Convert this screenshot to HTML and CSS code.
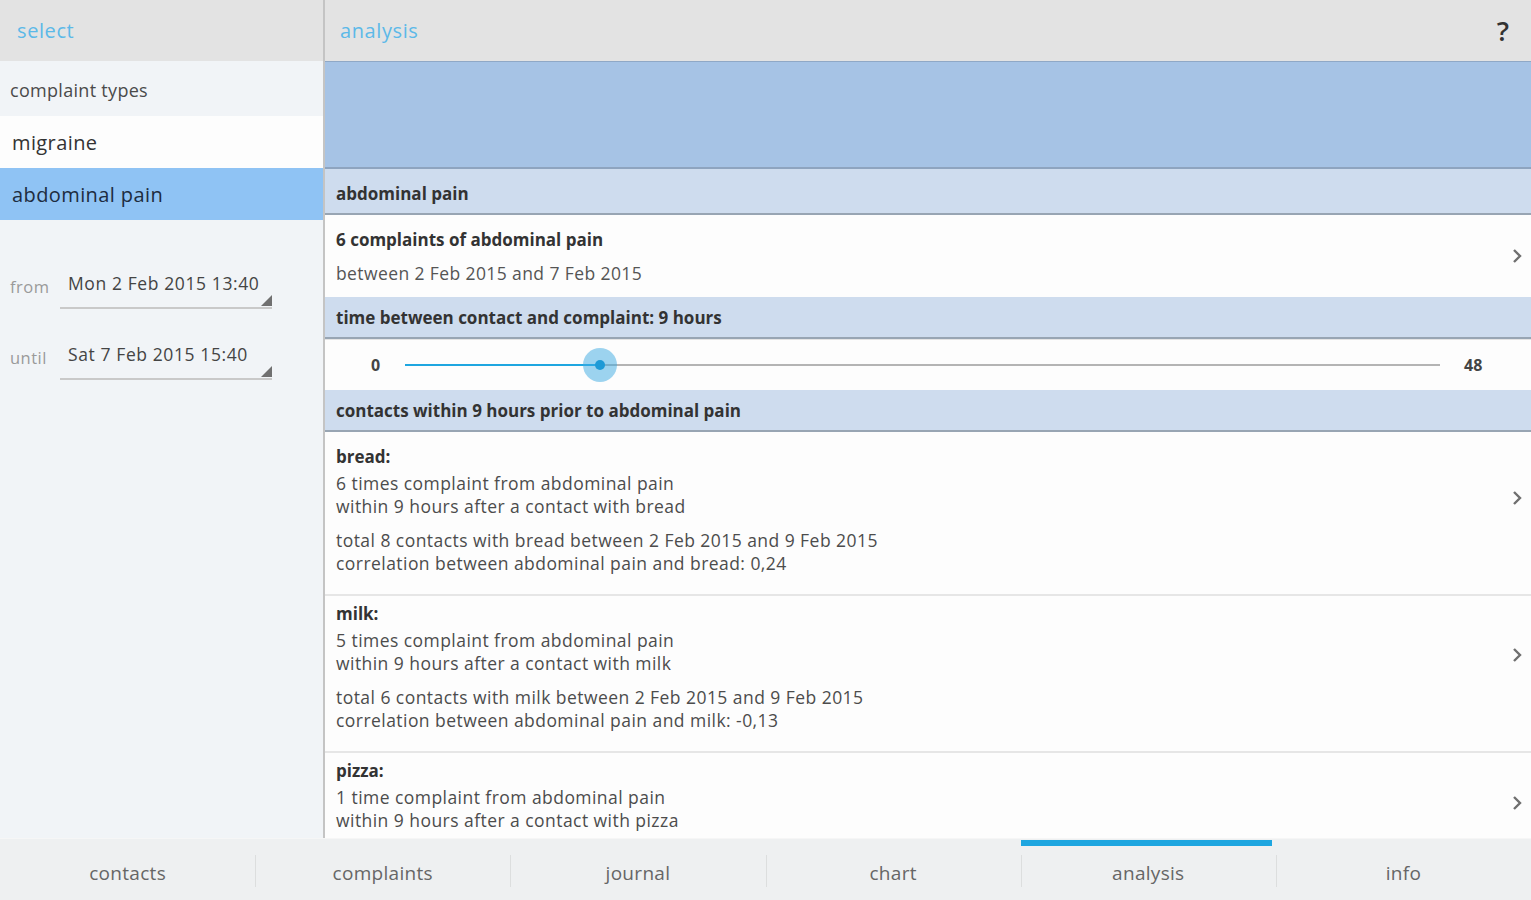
FILE: index.html
```html
<!DOCTYPE html>
<html lang="en">

<head>
    <meta charset="UTF-8">
    <meta name="viewport" content="width=device-width, initial-scale=1.0">
    <title>Analysis</title>
    <link rel="stylesheet" href="styles.css">
</head>

<body>
    <div class="app">
        <div class="panes">
            <!-- left: selection -->
            <aside class="select-pane">
                <div class="bar">
                    <span class="bar-title">select</span>
                </div>
                <div class="list-label">complaint types</div>
                <div class="type-item">migraine</div>
                <div class="type-item selected">abdominal pain</div>

                <div class="dates">
                    <div class="date-row">
                        <span class="date-label">from</span>
                        <div class="date-field">Mon 2 Feb 2015 13:40</div>
                    </div>
                    <div class="date-row">
                        <span class="date-label">until</span>
                        <div class="date-field">Sat 7 Feb 2015 15:40</div>
                    </div>
                </div>
            </aside>

            <!-- right: analysis -->
            <main class="analysis-pane">
                <div class="bar">
                    <span class="bar-title">analysis</span>
                    <span class="help">?</span>
                </div>
                <div class="scroll">
                    <div class="band"></div>

                    <div class="section-head first">abdominal pain</div>
                    <div class="row summary">
                        <div class="row-body">
                            <div class="row-title">6 complaints of abdominal pain</div>
                            <div class="row-sub">between 2 Feb 2015 and 7 Feb 2015</div>
                        </div>
                        <svg class="chevron" width="10" height="16" viewBox="0 0 10 16">
                            <polyline points="2,2 8,8 2,14" fill="none" stroke="#6f6f6f" stroke-width="2.4" />
                        </svg>
                    </div>

                    <div class="section-head">time between contact and complaint: 9 hours</div>
                    <div class="slider-row">
                        <span class="slider-min">0</span>
                        <div class="slider">
                            <div class="slider-fill" style="width: 18.8%"></div>
                            <div class="slider-thumb" style="left: 18.8%"></div>
                        </div>
                        <span class="slider-max">48</span>
                    </div>

                    <div class="section-head">contacts within 9 hours prior to abdominal pain</div>
                    <div class="contacts">
                        <div class="row contact">
                            <div class="row-body">
                                <div class="contact-name">bread:</div>
                                <p>6 times complaint from abdominal pain<br>within 9 hours after a contact with bread</p>
                                <p class="totals">total 8 contacts with bread between 2 Feb 2015 and 9 Feb 2015<br>correlation between abdominal pain and bread: 0,24</p>
                            </div>
                            <svg class="chevron" width="10" height="16" viewBox="0 0 10 16">
                                <polyline points="2,2 8,8 2,14" fill="none" stroke="#6f6f6f" stroke-width="2.4" />
                            </svg>
                        </div>
                        <div class="row contact">
                            <div class="row-body">
                                <div class="contact-name">milk:</div>
                                <p>5 times complaint from abdominal pain<br>within 9 hours after a contact with milk</p>
                                <p class="totals">total 6 contacts with milk between 2 Feb 2015 and 9 Feb 2015<br>correlation between abdominal pain and milk: -0,13</p>
                            </div>
                            <svg class="chevron" width="10" height="16" viewBox="0 0 10 16">
                                <polyline points="2,2 8,8 2,14" fill="none" stroke="#6f6f6f" stroke-width="2.4" />
                            </svg>
                        </div>
                        <div class="row contact last">
                            <div class="row-body">
                                <div class="contact-name">pizza:</div>
                                <p>1 time complaint from abdominal pain<br>within 9 hours after a contact with pizza</p>
                            </div>
                            <svg class="chevron" width="10" height="16" viewBox="0 0 10 16">
                                <polyline points="2,2 8,8 2,14" fill="none" stroke="#6f6f6f" stroke-width="2.4" />
                            </svg>
                        </div>
                    </div>
                </div>
            </main>
        </div>

        <nav class="tabs">
            <div class="tab">contacts</div>
            <div class="tab">complaints</div>
            <div class="tab">journal</div>
            <div class="tab">chart</div>
            <div class="tab active">analysis</div>
            <div class="tab">info</div>
        </nav>
    </div>
</body>

</html>
```

FILE: styles.css
```css
:root {
    --bar-bg: #e3e3e3;
    --accent: #5cb9e8;
    --pane-bg: #f1f4f7;
    --selected: #8fc3f4;
    --band: #a6c3e5;
    --section: #cedcee;
    --section-line: #98a5b3;
    --text: #3a3a3a;
    --muted: #9a9a9a;
    --tab-bg: #eef0f1;
    --tab-active: #1ea6e0;
}

* {
    box-sizing: border-box;
}

body {
    margin: 0;
    font-family: "Open Sans", "Noto Sans", sans-serif;
    color: var(--text);
    background: #ffffff;
}

.app {
    width: 1531px;
    height: 900px;
    display: flex;
    flex-direction: column;
    overflow: hidden;
}

.panes {
    flex: 1;
    display: flex;
    min-height: 0;
}

/* top bars */
.bar {
    height: 61px;
    flex: none;
    display: flex;
    align-items: center;
    background: var(--bar-bg);
    padding-left: 17px;
    padding-right: 22px;
}

.bar-title {
    color: var(--accent);
    font-size: 20px;
    letter-spacing: 0.6px;
}

.help {
    margin-left: auto;
    font-size: 27px;
    font-weight: 600;
    color: #333;
}

/* left pane */
.select-pane {
    width: 325px;
    flex: none;
    display: flex;
    flex-direction: column;
    background: var(--pane-bg);
    border-right: 2px solid #c4c4c4;
}

.list-label {
    height: 55px;
    display: flex;
    align-items: center;
    padding-left: 10px;
    padding-top: 2px;
    font-size: 18px;
    letter-spacing: 0.3px;
    color: #4a4a4a;
}

.type-item {
    height: 52px;
    display: flex;
    align-items: center;
    padding-left: 12px;
    font-size: 20px;
    letter-spacing: 0.4px;
    color: #333;
    background: #fdfdfd;
}

.type-item.selected {
    background: var(--selected);
    color: #1d2c40;
}

.dates {
    padding-top: 45px;
}

.date-row {
    display: flex;
    align-items: flex-start;
    height: 71px;
}

.date-label {
    width: 60px;
    padding-left: 10px;
    padding-top: 10px;
    font-size: 16.5px;
    letter-spacing: 0.5px;
    color: var(--muted);
}

.date-field {
    position: relative;
    width: 212px;
    height: 44px;
    padding: 6px 0 0 8px;
    font-size: 17.5px;
    letter-spacing: 0.6px;
    color: #444;
    border-bottom: 2px solid #c9c9c9;
}

.date-field::after {
    content: "";
    position: absolute;
    right: 0;
    bottom: 1px;
    border-left: 11px solid transparent;
    border-bottom: 11px solid #707070;
}

/* right pane */
.analysis-pane {
    flex: 1;
    display: flex;
    flex-direction: column;
    min-width: 0;
}

.analysis-pane .bar {
    padding-left: 15px;
}

.scroll {
    flex: 1;
    overflow: hidden;
    background: #ffffff;
}

.band {
    height: 108px;
    background: var(--band);
    border-top: 1px solid #8fa8c6;
    border-bottom: 2px solid #8ea4bf;
}

.section-head {
    height: 42px;
    display: flex;
    align-items: center;
    padding-left: 11px;
    background: var(--section);
    font-size: 17px;
    font-weight: 700;
    color: #333;
    border-bottom: 2px solid var(--section-line);
}

.section-head.first {
    height: 46px;
    padding-top: 4px;
}

.row {
    display: flex;
    align-items: center;
    padding-left: 11px;
    padding-right: 9px;
    background: #fdfdfd;
}

.row-body {
    flex: 1;
}

.chevron {
    flex: none;
}

.summary {
    height: 82px;
}

.row-title {
    font-size: 17px;
    font-weight: 700;
    color: #333;
    line-height: 24px;
}

.row-sub {
    font-size: 17.5px;
    letter-spacing: 0.4px;
    color: #555;
    line-height: 24px;
    margin-top: 9px;
}

/* slider */
.slider-row {
    height: 51px;
    display: flex;
    align-items: center;
    background: #fdfdfd;
    border-top: 1px solid #e4e4e4;
}

.slider-min,
.slider-max {
    font-size: 16px;
    font-weight: 700;
    color: #444;
}

.slider-min {
    width: 80px;
    padding-left: 46px;
}

.slider {
    position: relative;
    flex: 1;
    height: 2px;
    background: #b4b4b4;
}

.slider-fill {
    height: 2px;
    background: var(--tab-active);
}

.slider-thumb {
    position: absolute;
    top: 1px;
    width: 34px;
    height: 34px;
    margin: -17px 0 0 -17px;
    border-radius: 50%;
    background: rgba(60, 170, 225, 0.5);
}

.slider-thumb::after {
    content: "";
    position: absolute;
    left: 12px;
    top: 12px;
    width: 10px;
    height: 10px;
    border-radius: 50%;
    background: #1e9ad6;
}

.slider-max {
    width: 91px;
    padding-left: 24px;
}

/* contact list */
.contacts {
    padding-top: 7px;
    background: #fdfdfd;
}

.contact {
    padding-top: 6px;
    padding-bottom: 19px;
    border-bottom: 2px solid #e6e6e6;
}

.contact .chevron {
    margin-bottom: 24px;
}

/* the last item continues below the fold */
.contact.last .chevron {
    margin-bottom: 0;
    margin-top: 14px;
}

.contact-name {
    font-size: 17px;
    font-weight: 700;
    color: #333;
    line-height: 24px;
}

.contact p {
    margin: 3px 0 0;
    font-size: 17.5px;
    letter-spacing: 0.45px;
    line-height: 23px;
    color: #4c4c4c;
}

.contact p.totals {
    margin-top: 11px;
}

/* bottom tabs */
.tabs {
    height: 62px;
    flex: none;
    display: flex;
    background: var(--tab-bg);
    border-top: 1px solid #f6f6f6;
}

.tab {
    position: relative;
    flex: 1;
    display: flex;
    align-items: center;
    justify-content: center;
    font-size: 19px;
    letter-spacing: 0.3px;
    color: #666;
    padding-top: 6px;
}

.tab + .tab::before {
    content: "";
    position: absolute;
    left: 0;
    top: 16px;
    height: 32px;
    border-left: 1px solid #dcdede;
}

.tab.active::after {
    content: "";
    position: absolute;
    left: 0;
    right: 4px;
    top: 1px;
    height: 6px;
    background: var(--tab-active);
}
```
